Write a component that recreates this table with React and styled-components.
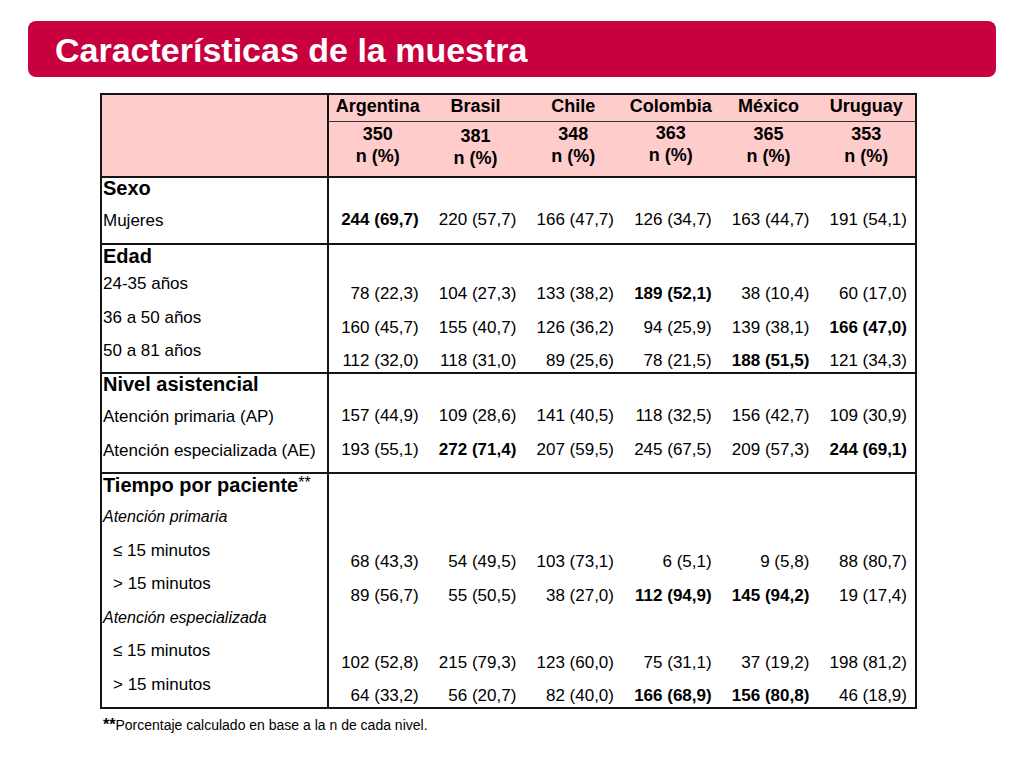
import React from "react";
import styled, { createGlobalStyle } from "styled-components";

const Global = createGlobalStyle`
  html, body { margin: 0; padding: 0; background: #ffffff; }
  body { font-family: "Liberation Sans", Arial, Helvetica, sans-serif; color: #000; }
`;

const Page = styled.div`
  width: 1024px;
  height: 768px;
  padding-top: 21px;
  box-sizing: border-box;
`;

const Banner = styled.header`
  margin: 0 28px;
  height: 56px;
  border-radius: 8px;
  background: #c8003e;
  display: flex;
  align-items: center;
  padding-left: 27px;
`;

const Title = styled.h1`
  margin: 0;
  color: #ffffff;
  font-size: 34px;
  font-weight: 700;
  line-height: 1;
  padding-top: 2px;
`;

const Table = styled.div`
  margin: 16px 0 0 100px;
  width: 817px;
  border: 2px solid #151515;
  box-sizing: border-box;
`;

const HeadGrid = styled.div`
  display: grid;
  grid-template-columns: 227px repeat(6, 1fr);
  grid-template-rows: 27px 54px;
  background: #ffcccc;
`;

const Corner = styled.div`
  grid-row: 1 / span 2;
  border-right: 2px solid #151515;
`;

const CountryCell = styled.div`
  display: flex;
  align-items: center;
  justify-content: center;
  font-size: 18px;
  font-weight: 700;
  padding-bottom: 4px;
  border-bottom: 1.5px solid #333;
`;

const CountCell = styled.div`
  display: flex;
  flex-direction: column;
  align-items: center;
  font-size: 18px;
  font-weight: 700;
  line-height: 22px;
  padding-top: ${(p) => p.$top}px;
`;

const Section = styled.div`
  display: grid;
  grid-template-columns: 227px 1fr;
  grid-template-rows: minmax(0, 1fr);
  height: ${(p) => p.$h}px;
  border-top: 2px solid #151515;
  box-sizing: border-box;
`;

const LabelCol = styled.div`
  border-right: 2px solid #151515;
  display: flex;
  flex-direction: column;
  padding-left: 1px;
  min-height: 0;
`;

const SectionTitle = styled.div`
  font-size: 20px;
  font-weight: 700;
  line-height: 20px;
  height: 20px;
  margin-top: ${(p) => p.$top}px;
  margin-bottom: ${(p) => p.$gap}px;
  white-space: nowrap;
`;

const Stars = styled.span`
  font-weight: 400;
  font-size: 16px;
  vertical-align: 4px;
`;

const ItemLabel = styled.div`
  font-size: ${(p) => (p.$italic ? 16 : 17)}px;
  font-style: ${(p) => (p.$italic ? "italic" : "normal")};
  line-height: 33.5px;
  height: 33.5px;
  flex-shrink: 0;
  padding-left: ${(p) => (p.$indent ? 10 : 0)}px;
  white-space: nowrap;
`;

const DataGrid = styled.div`
  display: grid;
  grid-template-columns: repeat(6, 1fr);
  padding-top: ${(p) => p.$top}px;
  align-content: start;
  min-height: 0;
`;

const ValueCol = styled.div`
  display: flex;
  flex-direction: column;
  align-items: flex-end;
  padding-right: 8px;
`;

const Value = styled.div`
  font-size: 17px;
  font-weight: ${(p) => (p.$bold ? 700 : 400)};
  line-height: 33.5px;
  height: 33.5px;
  flex-shrink: 0;
  white-space: nowrap;
`;

const Footnote = styled.p`
  margin: 7px 0 0 103px;
  font-size: 14px;
  line-height: 18px;
`;

const FootStars = styled.b`
  font-size: 16px;
`;

const countries = [
  { name: "Argentina", n: "350", top: 1 },
  { name: "Brasil", n: "381", top: 3 },
  { name: "Chile", n: "348", top: 1 },
  { name: "Colombia", n: "363", top: 0 },
  { name: "México", n: "365", top: 1 },
  { name: "Uruguay", n: "353", top: 1 },
];

// each value: [text, bold]; null = empty line
const sections = [
  {
    title: "Sexo",
    h: 67,
    titleTop: 0,
    gap: 6,
    dataTop: 25,
    labels: [{ t: "Mujeres" }],
    cols: [
      [["244 (69,7)", true]],
      [["220 (57,7)"]],
      [["166 (47,7)"]],
      [["126 (34,7)"]],
      [["163 (44,7)"]],
      [["191 (54,1)"]],
    ],
  },
  {
    title: "Edad",
    h: 129,
    titleTop: 1,
    gap: 1,
    dataTop: 32,
    labels: [{ t: "24-35 años" }, { t: "36 a 50 años" }, { t: "50 a 81 años" }],
    cols: [
      [["78 (22,3)"], ["160 (45,7)"], ["112 (32,0)"]],
      [["104 (27,3)"], ["155 (40,7)"], ["118 (31,0)"]],
      [["133 (38,2)"], ["126 (36,2)"], ["89 (25,6)"]],
      [["189 (52,1)", true], ["94 (25,9)"], ["78 (21,5)"]],
      [["38 (10,4)"], ["139 (38,1)"], ["188 (51,5)", true]],
      [["60 (17,0)"], ["166 (47,0)", true], ["121 (34,3)"]],
    ],
  },
  {
    title: "Nivel asistencial",
    h: 100,
    titleTop: 0,
    gap: 6,
    dataTop: 25,
    labels: [{ t: "Atención primaria (AP)" }, { t: "Atención especializada (AE)" }],
    cols: [
      [["157 (44,9)"], ["193 (55,1)"]],
      [["109 (28,6)"], ["272 (71,4)", true]],
      [["141 (40,5)"], ["207 (59,5)"]],
      [["118 (32,5)"], ["245 (67,5)"]],
      [["156 (42,7)"], ["209 (57,3)"]],
      [["109 (30,9)"], ["244 (69,1)", true]],
    ],
  },
  {
    title: "Tiempo por paciente",
    stars: true,
    h: 235,
    titleTop: -1,
    gap: 7,
    dataTop: 71,
    labels: [
      { t: "Atención primaria", italic: true },
      { t: "≤ 15 minutos", indent: true },
      { t: "> 15 minutos", indent: true },
      { t: "Atención especializada", italic: true },
      { t: "≤ 15 minutos", indent: true },
      { t: "> 15 minutos", indent: true },
    ],
    cols: [
      [["68 (43,3)"], ["89 (56,7)"], null, ["102 (52,8)"], ["64 (33,2)"]],
      [["54 (49,5)"], ["55 (50,5)"], null, ["215 (79,3)"], ["56 (20,7)"]],
      [["103 (73,1)"], ["38 (27,0)"], null, ["123 (60,0)"], ["82 (40,0)"]],
      [["6 (5,1)"], ["112 (94,9)", true], null, ["75 (31,1)"], ["166 (68,9)", true]],
      [["9 (5,8)"], ["145 (94,2)", true], null, ["37 (19,2)"], ["156 (80,8)", true]],
      [["88 (80,7)"], ["19 (17,4)"], null, ["198 (81,2)"], ["46 (18,9)"]],
    ],
  },
];

export default function App() {
  return (
    <Page>
      <Global />
      <Banner>
        <Title>Características de la muestra</Title>
      </Banner>
      <Table>
        <HeadGrid>
          <Corner />
          {countries.map((c) => (
            <CountryCell key={c.name}>{c.name}</CountryCell>
          ))}
          {countries.map((c) => (
            <CountCell key={c.name + "n"} $top={c.top}>
              <span>{c.n}</span>
              <span>n (%)</span>
            </CountCell>
          ))}
        </HeadGrid>
        {sections.map((s) => (
          <Section key={s.title} $h={s.h}>
            <LabelCol>
              <SectionTitle $top={s.titleTop} $gap={s.gap}>
                {s.title}
                {s.stars && <Stars>**</Stars>}
              </SectionTitle>
              {s.labels.map((l, i) => (
                <ItemLabel key={i} $italic={l.italic} $indent={l.indent}>
                  {l.t}
                </ItemLabel>
              ))}
            </LabelCol>
            <DataGrid $top={s.dataTop}>
              {s.cols.map((col, ci) => (
                <ValueCol key={ci}>
                  {col.map((v, vi) =>
                    v ? (
                      <Value key={vi} $bold={v[1]}>
                        {v[0]}
                      </Value>
                    ) : (
                      <Value key={vi} />
                    )
                  )}
                </ValueCol>
              ))}
            </DataGrid>
          </Section>
        ))}
      </Table>
      <Footnote>
        <FootStars>**</FootStars>Porcentaje calculado en base a la n de cada nivel.
      </Footnote>
    </Page>
  );
}
